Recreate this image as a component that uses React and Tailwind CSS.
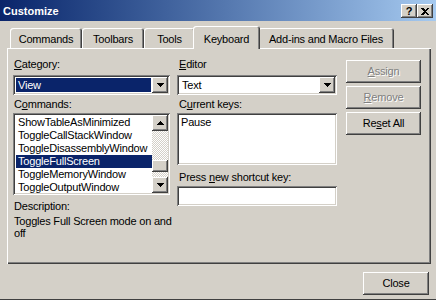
import React from 'react';

const raised = 'shadow-[inset_-1px_-1px_#404040,inset_1px_1px_#ffffff,inset_-2px_-2px_#808080,inset_2px_2px_#d4d0c8]';
const sunken = 'shadow-[inset_1px_1px_#808080,inset_-1px_-1px_#ffffff,inset_2px_2px_#404040,inset_-2px_-2px_#d4d0c8]';

const Arrow = ({ up }) => (
    <svg width="7" height="4" viewBox="0 0 7 4" shapeRendering="crispEdges">
        {up ? (
            <g fill="#000">
                <rect x="3" y="0" width="1" height="1" />
                <rect x="2" y="1" width="3" height="1" />
                <rect x="1" y="2" width="5" height="1" />
                <rect x="0" y="3" width="7" height="1" />
            </g>
        ) : (
            <g fill="#000">
                <rect x="0" y="0" width="7" height="1" />
                <rect x="1" y="1" width="5" height="1" />
                <rect x="2" y="2" width="3" height="1" />
                <rect x="3" y="3" width="1" height="1" />
            </g>
        )}
    </svg>
);

const ArrowButton = ({ up }) => (
    <div className={`w-[16px] h-[16px] shrink-0 flex items-center justify-center bg-[#d4d0c8] ${raised}`}>
        <Arrow up={up} />
    </div>
);

const Combo = ({ value, selected }) => (
    <div className={`h-[20px] flex p-[2px] bg-white ${sunken}`}>
        <div className="flex-1 flex items-center pl-px pr-px py-px">
            <div className={`h-full flex-1 flex items-center pl-[2px] ${selected ? 'bg-[#0a246a] text-white' : ''}`}>
                {value}
            </div>
        </div>
        <ArrowButton />
    </div>
);

const Tab = ({ label, active, width }) => (
    <div
        className={
            active
                ? `relative z-10 -mx-[2px] -mb-px h-[23px] pt-[7px] text-center bg-[#d4d0c8] rounded-t-[3px] shadow-[inset_1px_1px_#ffffff,inset_-1px_0_#404040,inset_-2px_0_#808080] ${width}`
                : `h-[20px] pt-[5px] text-center bg-[#d4d0c8] rounded-t-[3px] shadow-[inset_1px_1px_#ffffff,inset_-1px_0_#404040,inset_-2px_0_#808080] ${width}`
        }
    >
        {label}
    </div>
);

const Button = ({ children, disabled, className = '' }) => (
    <div
        className={`h-[23px] flex items-center justify-center bg-[#d4d0c8] ${raised} ${
            disabled ? 'text-[#808080] [text-shadow:1px_1px_#ffffff]' : ''
        } ${className}`}
    >
        {children}
    </div>
);

const commands = [
    'ShowTableAsMinimized',
    'ToggleCallStackWindow',
    'ToggleDisassemblyWindow',
    'ToggleFullScreen',
    'ToggleMemoryWindow',
    'ToggleOutputWindow',
];

const App = () => {
    return (
        <div className="w-[436px] h-[300px] bg-[#d4d0c8] flex flex-col border-b border-[#404040] overflow-hidden text-[11px] leading-[13px] tracking-[-0.2px] text-black font-['Tahoma','Liberation_Sans',Arial,sans-serif]">
            {/* title bar */}
            <div className="h-[21px] shrink-0 flex items-start bg-gradient-to-r from-[#0a246a] to-[#a6caf0] pl-[3px] pr-[3px]">
                <span className="flex-1 pt-[5px] font-bold text-white tracking-normal">Customize</span>
                <div className="flex mt-[4px]">
                    <div className={`w-[16px] h-[14px] flex items-center justify-center bg-[#d4d0c8] font-bold text-[11px] leading-none ${raised}`}>
                        ?
                    </div>
                    <div className={`w-[16px] h-[14px] flex items-center justify-center bg-[#d4d0c8] ${raised}`}>
                        <svg width="8" height="7" viewBox="0 0 8 7" shapeRendering="crispEdges">
                            <path d="M0 0h2l2 2 2-2h2L5 3.5 8 7H6L4 5 2 7H0l3-3.5z" fill="#000" />
                        </svg>
                    </div>
                </div>
            </div>

            {/* tabs */}
            <div className="h-[27px] shrink-0 flex items-end pl-[10px]">
                <Tab label="Commands" width="w-[72px]" />
                <Tab label="Toolbars" width="w-[62px]" />
                <Tab label="Tools" width="w-[51px]" />
                <Tab label="Keyboard" width="w-[67px]" active />
                <Tab label="Add-ins and Macro Files" width="w-[136px]" />
            </div>

            {/* panel */}
            <div className="ml-[7px] w-[424px] h-[216px] shrink-0 flex pt-[10px] pl-[6px] bg-[#d4d0c8] shadow-[inset_1px_1px_#ffffff,inset_-1px_-1px_#404040,inset_-2px_-2px_#808080]">
                {/* left column */}
                <div className="w-[157px] flex flex-col">
                    <div className="pl-px">
                        <u className="underline-offset-[1px]">C</u>ategory:
                    </div>
                    <div className="mt-[4px]">
                        <Combo value="View" selected />
                    </div>
                    <div className="mt-[3px] pl-px">
                        C<u className="underline-offset-[1px]">o</u>mmands:
                    </div>
                    <div className={`mt-[2px] h-[82px] flex p-[2px] bg-white ${sunken}`}>
                        <div className="flex-1 pt-[1px] pl-px">
                            {commands.map((c) => (
                                <div
                                    key={c}
                                    className={`h-[13px] pl-[2px] whitespace-nowrap ${
                                        c === 'ToggleFullScreen' ? 'bg-[#0a246a] text-white' : ''
                                    }`}
                                >
                                    {c}
                                </div>
                            ))}
                        </div>
                        <div className="w-[16px] flex flex-col">
                            <ArrowButton up />
                            <div className="flex-1 flex flex-col bg-[image:repeating-conic-gradient(#ffffff_0_25%,#d4d0c8_0_50%)] bg-[length:2px_2px]">
                                <div className={`mt-[29px] h-[12px] bg-[#d4d0c8] ${raised}`} />
                            </div>
                            <ArrowButton />
                        </div>
                    </div>
                    <div className="mt-[5px] pl-px">Description:</div>
                    <div className="mt-[2px] pl-px leading-[12px] whitespace-nowrap">
                        Toggles Full Screen mode on and
                        <br />
                        off
                    </div>
                </div>

                {/* middle column */}
                <div className="w-[160px] ml-[7px] flex flex-col">
                    <div className="pl-[2px]">
                        <u className="underline-offset-[1px]">E</u>ditor
                    </div>
                    <div className="mt-[4px]">
                        <Combo value="Text" />
                    </div>
                    <div className="mt-[3px] pl-[2px]">
                        C<u className="underline-offset-[1px]">u</u>rrent keys:
                    </div>
                    <div className={`mt-[2px] h-[52px] p-[2px] pl-[4px] pt-[3px] bg-white ${sunken}`}>Pause</div>
                    <div className="mt-[6px] pl-[2px]">
                        Press <u className="underline-offset-[1px]">n</u>ew shortcut key:
                    </div>
                    <div className={`mt-[2px] h-[20px] bg-white ${sunken}`} />
                </div>

                {/* right column */}
                <div className="w-[75px] ml-[9px] pt-[2px] flex flex-col gap-[3px]">
                    <Button disabled>
                        <u className="underline-offset-[1px]">A</u>ssign
                    </Button>
                    <Button disabled>
                        <u className="underline-offset-[1px]">R</u>emove
                    </Button>
                    <Button>
                        Re<u className="underline-offset-[1px]">s</u>et All
                    </Button>
                </div>
            </div>

            {/* footer */}
            <div className="flex justify-end pr-[7px] mt-[8px]">
                <Button className="w-[66px] h-[22px]">Close</Button>
            </div>
        </div>
    );
};

export default App;
